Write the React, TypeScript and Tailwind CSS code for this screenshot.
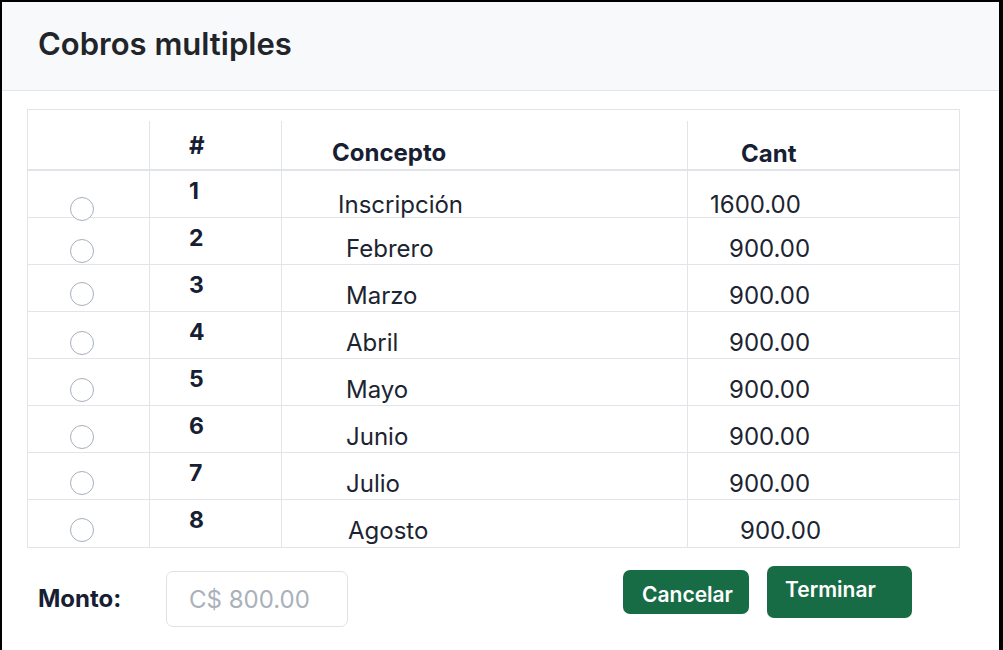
const rows = [
  { n: "1", concept: "Inscripción", amount: "1600.00", radio: "mt-[26px]", text: "pt-[20px]", cpad: "pl-[56px]", apad: "pl-[22px]" },
  { n: "2", concept: "Febrero", amount: "900.00", radio: "mt-[21px]", text: "pt-[17px]", cpad: "pl-[64px]", apad: "pl-[41px]" },
  { n: "3", concept: "Marzo", amount: "900.00", radio: "mt-[17px]", text: "pt-[17px]", cpad: "pl-[64px]", apad: "pl-[41px]" },
  { n: "4", concept: "Abril", amount: "900.00", radio: "mt-[19px]", text: "pt-[17px]", cpad: "pl-[64px]", apad: "pl-[41px]" },
  { n: "5", concept: "Mayo", amount: "900.00", radio: "mt-[19px]", text: "pt-[17px]", cpad: "pl-[64px]", apad: "pl-[41px]" },
  { n: "6", concept: "Junio", amount: "900.00", radio: "mt-[19px]", text: "pt-[17px]", cpad: "pl-[64px]", apad: "pl-[41px]" },
  { n: "7", concept: "Julio", amount: "900.00", radio: "mt-[18px]", text: "pt-[17px]", cpad: "pl-[64px]", apad: "pl-[41px]" },
  { n: "8", concept: "Agosto", amount: "900.00", radio: "mt-[18px]", text: "pt-[17px]", cpad: "pl-[66px]", apad: "pl-[52px]" },
];

const cols = "grid grid-cols-[121px_132px_406px_1fr]";

export default function App() {
  return (
    <div className="h-[650px] bg-black pt-[2px] pl-[2px] pr-[4px] font-['Inter','Liberation_Sans',sans-serif]">
      <div className="h-full bg-white flex flex-col">
        {/* Header */}
        <div className="h-[89px] shrink-0 bg-[#f8f9fb] border-b border-[#e2e5e9] pl-[36px] pt-[23px]">
          <h1 className="text-[31px] leading-[37px] font-semibold text-[#212529]">Cobros multiples</h1>
        </div>

        {/* Table */}
        <div className="mt-[18px] ml-[25px] w-[933px] border border-[#e1e4e9] text-[#1c2431]">
          <div className="pt-[11px] border-b-2 border-[#e1e4e9]">
            <div className={`${cols} h-[48px] text-[24px] leading-[29px] font-bold text-[#172033]`}>
              <div />
              <div className="border-l border-[#e1e4e9] pl-[39px] pt-[10px]">#</div>
              <div className="border-l border-[#e1e4e9] pl-[50px] pt-[17px]">Concepto</div>
              <div className="border-l border-[#e1e4e9] pl-[53px] pt-[18px]">Cant</div>
            </div>
          </div>

          {rows.map((r, i) => (
            <div
              key={r.n}
              className={`${cols} h-[47px] ${i < rows.length - 1 ? "border-b border-[#e1e4e9]" : ""}`}
            >
              <div className="pl-[42px]">
                <div className={`${r.radio} relative w-[24px] h-[24px] rounded-full border-[1.5px] border-[#a7b0bc] bg-white`} />
              </div>
              <div className="border-l border-[#e1e4e9] pl-[39px] pt-[6px] text-[23px] leading-[28px] font-bold text-[#172033]">
                {r.n}
              </div>
              <div className={`border-l border-[#e1e4e9] ${r.cpad} ${r.text} text-[24px] leading-[28px]`}>
                {r.concept}
              </div>
              <div className={`border-l border-[#e1e4e9] ${r.apad} ${r.text} text-[24px] leading-[28px]`}>
                {r.amount}
              </div>
            </div>
          ))}
        </div>

        {/* Footer */}
        <div className="mt-[23px] flex items-start pl-[36px]">
          <div className="w-[128px] h-[56px] flex items-center text-[24px] font-bold text-[#172033]">Monto:</div>
          <input
            type="text"
            placeholder="C$ 800.00"
            className="w-[182px] h-[56px] rounded-[7px] border border-[#dfe3e8] pl-[22px] text-[24px] text-[#1c2431] placeholder:text-[#a9b1bb] outline-none"
          />
          <div className="ml-[275px] -mt-[5px] flex items-center gap-[18px]">
            <button className="w-[126px] h-[44px] rounded-[7px] bg-[#176c45] text-white text-[21px] leading-[25px] font-semibold flex items-center justify-center pl-[3px] pt-[4px]">
              Cancelar
            </button>
            <button className="w-[145px] h-[52px] rounded-[7px] bg-[#176c45] text-white text-[21px] leading-[25px] font-semibold flex items-start pl-[18px] pt-[11px]">
              Terminar
            </button>
          </div>
        </div>
      </div>
    </div>
  );
}
